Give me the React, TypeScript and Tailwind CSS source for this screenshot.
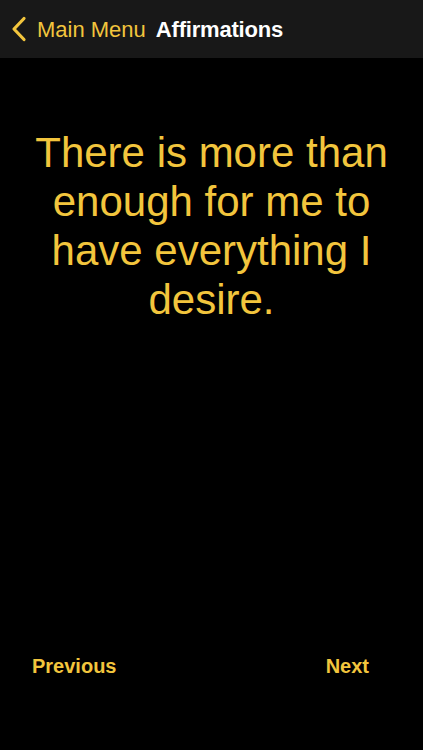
export default function App() {
  return (
    <div
      className="flex h-[750px] w-[423px] flex-col bg-black"
      style={{ fontFamily: '"Liberation Sans", Arial, sans-serif' }}
    >
      <header className="flex h-[58px] shrink-0 items-center bg-[#181818] pl-[11px]">
        <svg width="16" height="26" viewBox="0 0 16 26" className="shrink-0">
          <path d="M13 2.5 L3 13 L13 23.5" fill="none" stroke="#f2c53d" strokeWidth="3.2" strokeLinecap="round" strokeLinejoin="round" />
        </svg>
        <span className="ml-[10px] text-[22px] text-[#f2c53d]">Main Menu</span>
        <span className="ml-[10px] text-[22px] font-bold tracking-[-0.2px] text-white">Affirmations</span>
      </header>

      <main className="flex flex-1 flex-col">
        <p className="mt-[70px] px-[18px] text-center text-[42px] leading-[49px] text-[#f2c53d]">
          There is more than enough for me to have everything I desire.
        </p>
      </main>

      <footer className="flex h-[99px] shrink-0 items-start justify-between pl-[32px] pr-[54px]">
        <button className="text-[20px] font-bold text-[#f2c53d]">Previous</button>
        <button className="text-[20px] font-bold text-[#f2c53d]">Next</button>
      </footer>
    </div>
  )
}
